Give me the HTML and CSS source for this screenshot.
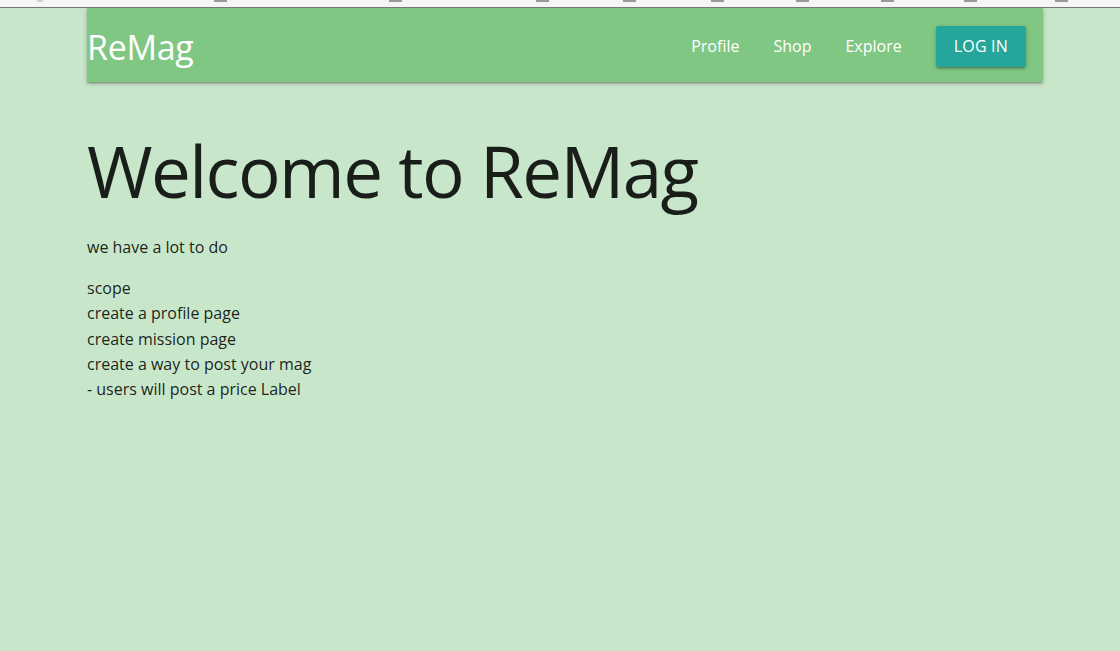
FILE: index.html
```html
<!DOCTYPE html>
<html lang="en">
<head>
<meta charset="utf-8">
<title>ReMag</title>
<link rel="stylesheet" href="styles.css">
</head>
<body>
<div class="chrome">
  <span class="mark m0"></span>
  <span class="mark m1"></span>
  <span class="mark m2"></span>
  <span class="mark m3"></span>
  <span class="mark m4"></span>
  <span class="mark m5"></span>
  <span class="mark m6"></span>
  <span class="mark m7"></span>
  <span class="mark m8"></span>
  <span class="mark m9"></span>
</div>
<div class="container">
  <nav class="navbar">
    <a class="brand" href="#">ReMag</a>
    <ul class="links">
      <li><a href="#">Profile</a></li>
      <li><a href="#">Shop</a></li>
      <li><a href="#">Explore</a></li>
      <li><a class="btn" href="#">LOG IN</a></li>
    </ul>
  </nav>
  <main class="content">
    <h1 class="title">Welcome to ReMag</h1>
    <p class="lead">we have a lot to do</p>
    <p class="todo">scope<br>create a profile page<br>create mission page<br>create a way to post your mag<br>- users will post a price Label</p>
  </main>
</div>
</body>
</html>
```
FILE: styles.css
```css
html, body {
  margin: 0;
  padding: 0;
}
body {
  background: #c8e6c9;
  font-family: "Open Sans", "Noto Sans", sans-serif;
  color: rgba(0, 0, 0, 0.87);
  font-size: 16px;
  line-height: 1.5;
  height: 651px;
  overflow: hidden;
}
.chrome {
  height: 7px;
  background: #f5f5f5;
  border-bottom: 1px solid #777;
  position: relative;
}
.mark {
  position: absolute;
  top: 0;
  height: 2px;
  width: 13px;
  background: #999;
}
.m0 { left: 37px; width: 6px; background: #d8c8d8; }
.m1 { left: 214px; }
.m2 { left: 389px; }
.m3 { left: 536px; }
.m4 { left: 623px; }
.m5 { left: 711px; }
.m6 { left: 796px; }
.m7 { left: 881px; }
.m8 { left: 964px; }
.m9 { left: 1055px; }
.container {
  width: 956px;
  margin: 0 auto 0 87px;
}
.navbar {
  height: 74px;
  background: #81c784;
  display: flex;
  align-items: center;
  justify-content: space-between;
  box-shadow: 0 2px 2px 0 rgba(0,0,0,0.14), 0 3px 1px -2px rgba(0,0,0,0.12), 0 1px 5px 0 rgba(0,0,0,0.2);
}
.brand {
  color: #fff;
  text-decoration: none;
  font-size: 34px;
  line-height: 74px;
  padding-top: 3px;
  letter-spacing: -0.3px;
}
.links {
  list-style: none;
  margin: 0;
  padding: 0;
  display: flex;
  align-items: center;
  height: 74px;
}
.links li a {
  color: #fff;
  text-decoration: none;
  font-size: 16px;
  padding: 0 17px;
  display: block;
  line-height: 74px;
  margin-top: 1px;
}
.links li a.btn {
  background: #26a69a;
  line-height: 41px;
  height: 41px;
  padding: 0 18px;
  margin: 2px 17px 0 17px;
  border-radius: 2px;
  font-size: 16px;
  letter-spacing: 0.2px;
  box-shadow: 0 2px 2px 0 rgba(0,0,0,0.14), 0 3px 1px -2px rgba(0,0,0,0.12), 0 1px 5px 0 rgba(0,0,0,0.2);
}
.content {
  padding: 0;
}
.title {
  font-weight: 400;
  font-size: 71px;
  line-height: 77px;
  margin: 50px 0 26px;
  letter-spacing: -1.6px;
}
.lead {
  margin: 0 0 17px;
}
.todo {
  margin: 0;
  line-height: 25.3px;
}
```
